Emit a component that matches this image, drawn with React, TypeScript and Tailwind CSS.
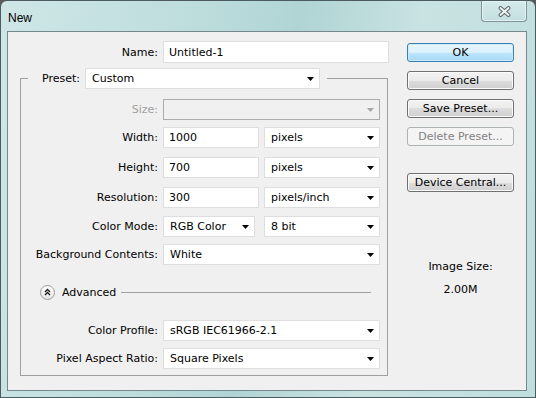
import React from "react";

const Arrow = ({ disabled }: { disabled?: boolean }) => (
  <svg width="7" height="4" viewBox="0 0 7 4" className="shrink-0">
    <polygon points="0,0 7,0 3.5,4" fill={disabled ? "#a6a6a6" : "#000"} />
  </svg>
);

const Select = ({ value, cls, disabled }: { value: string; cls: string; disabled?: boolean }) => (
  <div
    className={`flex h-full items-center justify-between pl-[6px] pr-[5px] ${
      disabled ? "border border-[#adadad] bg-[#f0f0f0]" : "border border-[#dedede] bg-white"
    } ${cls}`}
  >
    <span className="whitespace-nowrap pt-[2px]">{value}</span>
    <Arrow disabled={disabled} />
  </div>
);

const Input = ({ value, cls }: { value: string; cls: string }) => (
  <div className={`flex h-full items-center border border-[#dedede] bg-white pl-[5px] pt-[2px] ${cls}`}>
    <span className="whitespace-nowrap">{value}</span>
  </div>
);

const Row = ({
  label,
  children,
  cls,
  disabled,
}: {
  label: string;
  children: React.ReactNode;
  cls: string;
  disabled?: boolean;
}) => (
  <div className={`flex h-[21px] items-center ${cls}`}>
    <div className={`w-[137px] shrink-0 pt-[2px] text-right ${disabled ? "text-[#a0a0a0]" : ""}`}>{label}</div>
    <div className="ml-[5px] flex h-full items-center">{children}</div>
  </div>
);

const Btn = ({
  label,
  cls,
  variant,
}: {
  label: string;
  cls: string;
  variant?: "default" | "disabled";
}) => {
  const base =
    variant === "default"
      ? "border-[#3c7fb1] bg-[linear-gradient(#eaf6fd,#d9f0fc_50%,#bee6fd_50%,#a7d9f5)] text-black shadow-[inset_0_0_0_1px_#c8ecfd]"
      : variant === "disabled"
      ? "border-[#adb2b5] bg-[#f4f4f4] text-[#838383]"
      : "border-[#707070] bg-[linear-gradient(#f2f2f2,#ebebeb_50%,#dddddd_50%,#cfcfcf)] text-black shadow-[inset_0_0_0_1px_#fbfbfb]";
  return (
    <div
      className={`flex h-[19px] w-[107px] items-center justify-center rounded-[3px] border pt-[1px] ${base} ${cls}`}
    >
      {label}
    </div>
  );
};

export default function App() {
  return (
    <div className="h-[398px] w-[536px] bg-[#5a5a5a] font-['DejaVu_Sans',Tahoma,sans-serif] text-[11px] text-black">
      <div className="flex h-full w-full flex-col rounded-t-[7px] border border-[#4c5b60] bg-[linear-gradient(100deg,#cfe6e6_0%,#bcdcdc_35%,#b0d4d4_50%,#c9e2e2_70%,#c0dede_100%)]">
        {/* title bar */}
        <div className="flex h-[30px] shrink-0">
          <span className="ml-[7px] mt-[10px] font-['Liberation_Sans',Arial,sans-serif] text-[12px] leading-[14px] text-black">
            New
          </span>
          <div className="ml-auto mr-[8px] flex h-[21px] w-[46px] items-center justify-center rounded-b-[4px] border border-t-0 border-[#7e9397] bg-[linear-gradient(#d6eaea,#c3dfdf)] shadow-[inset_0_0_0_1px_#e6f3f3]">
            <svg width="13" height="11" viewBox="0 0 13 11">
              <path d="M2.5 2 L10.5 9 M10.5 2 L2.5 9" stroke="#5e666a" strokeWidth="3.8" strokeLinecap="round" />
              <path d="M2.5 2 L10.5 9 M10.5 2 L2.5 9" stroke="#f4f6f6" strokeWidth="1.8" strokeLinecap="round" />
            </svg>
          </div>
        </div>

        {/* client area */}
        <div className="ml-[6px] mr-[8px] flex h-[360px] w-[520px] shrink-0 border border-[#75888e] bg-[#f0f0f0]">
          {/* left column */}
          <div className="w-[399px] shrink-0 pt-[9px]">
            <div className="flex h-[22px] items-center">
              <div className="w-[150px] shrink-0 pt-[2px] text-right">Name:</div>
              <div className="ml-[5px] flex h-full">
                <Input value="Untitled-1" cls="w-[226px]" />
              </div>
            </div>

            <fieldset className="ml-[12px] mt-[5px] w-[368px] border border-[#a0a0a0] pb-[6px]">
              <legend className="ml-[7px] flex h-[21px] items-center pl-[14px] pr-[7px]">
                <span className="pt-[2px]">Preset:</span>
                <div className="ml-[5px] flex h-full">
                  <Select value="Custom" cls="w-[235px]" />
                </div>
              </legend>

              <div className="pt-[10px]">
                <Row label="Size:" cls="" disabled>
                  <Select value="" cls="w-[217px]" disabled />
                </Row>
                <Row label="Width:" cls="mt-[7px]">
                  <Input value="1000" cls="w-[96px]" />
                  <div className="ml-[5px] flex h-full">
                    <Select value="pixels" cls="w-[116px]" />
                  </div>
                </Row>
                <Row label="Height:" cls="mt-[9px]">
                  <Input value="700" cls="w-[96px]" />
                  <div className="ml-[5px] flex h-full">
                    <Select value="pixels" cls="w-[116px]" />
                  </div>
                </Row>
                <Row label="Resolution:" cls="mt-[9px]">
                  <Input value="300" cls="w-[96px]" />
                  <div className="ml-[5px] flex h-full">
                    <Select value="pixels/inch" cls="w-[116px]" />
                  </div>
                </Row>
                <Row label="Color Mode:" cls="mt-[8px]">
                  <Select value="RGB Color" cls="w-[92px]" />
                  <div className="ml-[9px] flex h-full">
                    <Select value="8 bit" cls="w-[116px]" />
                  </div>
                </Row>
                <Row label="Background Contents:" cls="mt-[7px]">
                  <Select value="White" cls="w-[217px]" />
                </Row>

                {/* Advanced */}
                <div className="mt-[19px] flex h-[16px] items-center">
                  <div className="ml-[19px] flex h-[15px] w-[15px] items-center justify-center rounded-full border border-[#9c9c9c] bg-[linear-gradient(#ffffff,#e4e4e4)]">
                    <svg width="7" height="8" viewBox="0 0 7 8">
                      <path d="M1 4 L3.5 1.5 L6 4 M1 7 L3.5 4.5 L6 7" stroke="#1a1a1a" strokeWidth="1.3" fill="none" />
                    </svg>
                  </div>
                  <span className="ml-[7px] pt-[2px]">Advanced</span>
                  <div className="ml-[5px] mr-[16px] h-px flex-1 bg-[#a0a0a0]" />
                </div>

                <Row label="Color Profile:" cls="mt-[20px]">
                  <Select value="sRGB IEC61966-2.1" cls="w-[217px]" />
                </Row>
                <Row label="Pixel Aspect Ratio:" cls="mt-[7px]">
                  <Select value="Square Pixels" cls="w-[217px]" />
                </Row>
              </div>
            </fieldset>
          </div>

          {/* right column */}
          <div className="flex w-[107px] shrink-0 flex-col pt-[11px]">
            <Btn label="OK" cls="" variant="default" />
            <Btn label="Cancel" cls="mt-[9px]" />
            <Btn label="Save Preset..." cls="mt-[9px]" />
            <Btn label="Delete Preset..." cls="mt-[9px]" variant="disabled" />
            <Btn label="Device Central..." cls="mt-[27px]" />
            <div className="mt-[68px] text-center leading-[13px]">Image Size:</div>
            <div className="mt-[10px] text-center leading-[13px]">2.00M</div>
          </div>
        </div>
      </div>
    </div>
  );
}
